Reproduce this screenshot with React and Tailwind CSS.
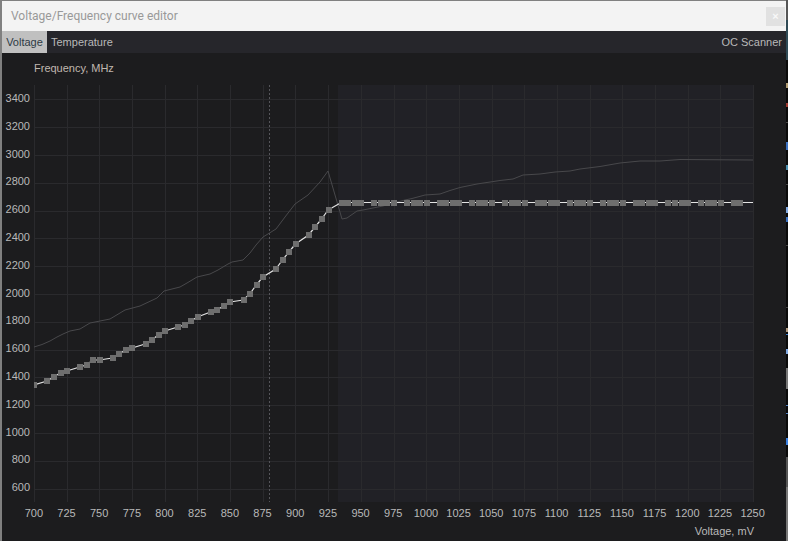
import React from 'react';

const SCALE = 719 / 550;
const PLOT_LEFT = 34;
const PLOT_TOP = 85;

const xOf = (mv) => (mv - 700) * SCALE;

// voltage -> y (page px) for the points under the flat part of the curve
const steepPoints = {
  700: 385, 710: 381, 715: 377, 720: 373, 725: 371, 735: 367, 740: 365, 745: 360, 750: 360,
  760: 358, 765: 354, 770: 350, 775: 348, 785: 344, 790: 340, 795: 335, 800: 331,
  810: 327, 815: 325, 820: 321, 825: 317, 835: 312, 840: 310, 845: 306, 850: 302,
  860: 300, 865: 294, 870: 285, 875: 277, 885: 269, 890: 260, 895: 252, 900: 244,
  910: 235, 915: 227, 920: 219, 925: 210,
};

const points = [];
for (let v = 700; v <= 1240; v += 5) {
  if ((v - 705) % 25 === 0) continue;
  points.push({ v, y: v >= 935 ? 202.5 : steepPoints[v] });
}

const linePath = [...points.map((p) => [xOf(p.v), p.y - PLOT_TOP]), [719, 202.5 - PLOT_TOP]]
  .map((p) => p.join(','))
  .join(' ');

// upper curve, read off in page px
const upperCurve = [
  [34, 347], [42, 344.5], [50, 341], [57, 337], [63, 334], [70, 331], [80, 329], [90, 323],
  [100, 321], [110, 319], [125, 310], [140, 306], [157, 298], [164, 291], [180, 287], [187, 283],
  [197, 277], [210, 274], [218, 270], [228, 264], [232, 262], [243, 260], [250, 253], [256, 245],
  [263, 237], [276, 229], [285, 217], [295, 204], [308, 195], [320, 182], [328, 171], [342, 219],
  [347, 218], [357, 211], [363, 210], [383, 206], [397, 202], [405, 200], [412, 198.5], [425, 195],
  [440, 194], [450, 190.5], [460, 187.5], [477, 184], [500, 180.5], [513, 179], [523, 175], [540, 174],
  [555, 172], [570, 171], [580, 169], [600, 166.5], [620, 163], [640, 161], [660, 161], [680, 159.5],
  [753, 160],
]
  .map(([x, y]) => `${x - PLOT_LEFT},${y - PLOT_TOP}`)
  .join(' ');

const yLabels = [3400, 3200, 3000, 2800, 2600, 2400, 2200, 2000, 1800, 1600, 1400, 1200, 1000, 800, 600];
const xLabels = [];
for (let v = 700; v <= 1250; v += 25) xLabels.push(v);

// bits of the desktop showing past the window edge: [y, height, colour]
const desktopBits = [
  [0, 20, '#555555'], [20, 40, '#2f4a55'], [83, 5, '#b09a70'], [103, 4, '#a03a30'], [122, 1, '#444444'],
  [142, 8, '#3a70c0'], [165, 5, '#4a90b0'], [184, 1, '#444444'], [207, 6, '#80a8e0'], [217, 5, '#3a70c0'],
  [245, 1, '#444444'], [307, 1, '#444444'], [328, 4, '#b09a80'], [334, 1, '#3a80d0'], [349, 5, '#80a8e0'],
  [368, 21, '#777777'], [405, 1, '#5080c0'], [413, 1, '#5080c0'], [438, 7, '#3a80e0'], [457, 30, '#555555'],
  [487, 54, '#777777'],
];

function Chart() {
  return (
    <svg width="720" height="417" className="block shrink-0" shapeRendering="crispEdges">
      <rect x="304" y="0" width="416" height="417" fill="#212126" />
      {xLabels.map((v) => (
        <line key={v} x1={Math.round(xOf(v)) + 0.5} x2={Math.round(xOf(v)) + 0.5} y1="0" y2="417" stroke="#2a2a2d" />
      ))}
      {yLabels.map((_, i) => {
        const y = Math.round(403.5 - 27.8 * i) + 0.5;
        return <line key={i} x1="0" x2="720" y1={y} y2={y} stroke="#2a2a2d" />;
      })}
      <line x1="235.5" x2="235.5" y1="0" y2="417" stroke="#55555a" strokeDasharray="2 2" />
      <polyline points={upperCurve} fill="none" stroke="#48484b" strokeWidth="1" shapeRendering="auto" />
      <polyline points={linePath} fill="none" stroke="#e4e4e4" strokeWidth="1.2" shapeRendering="auto" />
      {points.map((p) => (
        <rect key={p.v} x={Math.round(xOf(p.v) - 2.6)} y={Math.round(p.y - 3 - PLOT_TOP)} width="6" height="6" fill="#6e6e6e" />
      ))}
    </svg>
  );
}

export default function App() {
  return (
    <div className="w-[788px] h-[541px] overflow-hidden bg-[#808080] pt-px pl-[2px] flex font-['Liberation_Sans',sans-serif]">
      <div className="w-[784px] h-[540px] flex flex-col bg-[#1c1c1e] shrink-0">
        <div className="h-[30px] shrink-0 bg-[#f3f3f3] flex items-center justify-between pl-[9px] pr-px">
          <span className="text-[12px] text-[#999999] font-['Roboto',sans-serif]">Voltage/Frequency curve editor</span>
          <div className="w-[19px] h-[19px] bg-[#e1e1e1] text-[#f8f8f8] text-[11px] font-bold flex items-center justify-center">×</div>
        </div>
        <div className="h-[22px] shrink-0 bg-[#26262b] flex items-center text-[11px] text-[#b9b9b9]">
          <div className="h-full w-[45px] bg-[#c0c0c0] text-[#2e3a44] flex items-center justify-center">Voltage</div>
          <span className="ml-[4px]">Temperature</span>
          <span className="ml-auto mr-[4px]">OC Scanner</span>
        </div>
        <div className="flex-1 flex flex-col text-[11px] text-[#b9b9b9]">
          <div className="h-[32px] shrink-0 pl-[32px] pt-[8px] leading-[14px] text-[#c0b8b0]">Frequency, MHz</div>
          <div className="flex h-[417px] shrink-0">
            <div className="w-[32px] shrink-0 pt-[4px] flex flex-col items-end pr-[4px]">
              {yLabels.map((v) => (
                <div key={v} className="h-[27.8px] shrink-0 leading-[19px]">{v}</div>
              ))}
            </div>
            <Chart />
          </div>
          <div className="flex pl-[15.5px] pt-[4px]">
            {xLabels.map((v) => (
              <div key={v} className="w-[32.68px] shrink-0 text-center leading-[14px]">{v}</div>
            ))}
          </div>
          <div className="text-right pr-[32px] pt-[4px] leading-[14px]">Voltage, mV</div>
        </div>
      </div>
      <svg width="2" height="541" className="block shrink-0 -mt-px bg-[#0a0a0a]">
        {desktopBits.map(([y, h, fill]) => (
          <rect key={y} x="0" y={y} width="2" height={h} fill={fill} />
        ))}
      </svg>
    </div>
  );
}
